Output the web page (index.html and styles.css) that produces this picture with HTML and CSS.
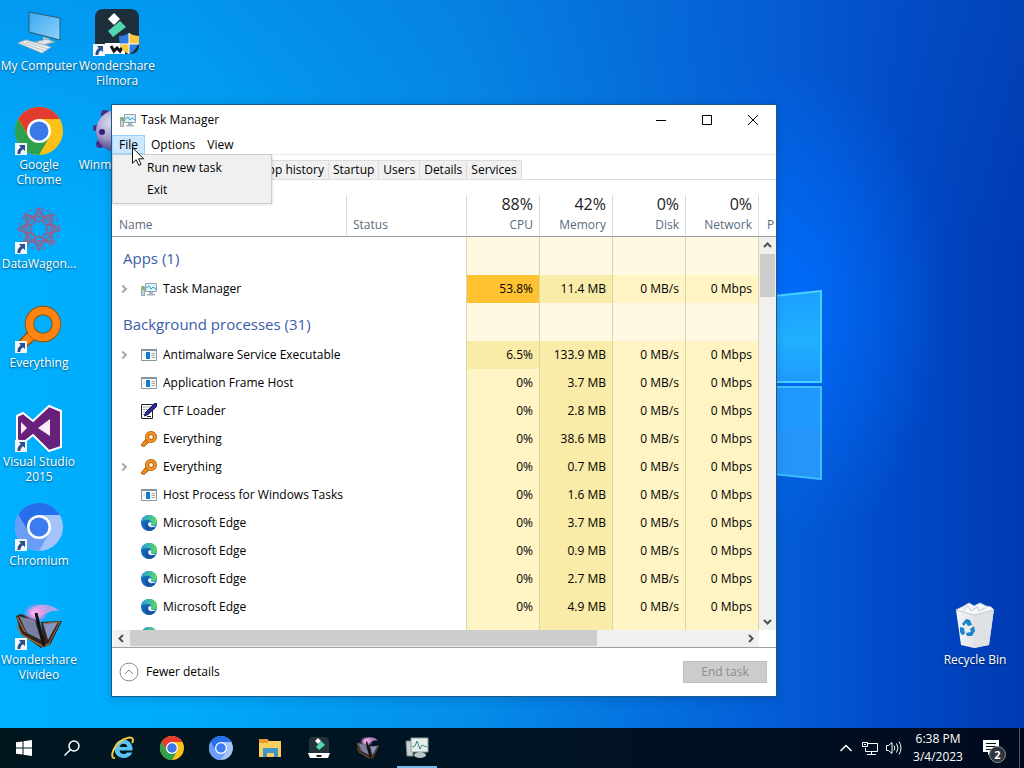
FILE: index.html
```html
<!DOCTYPE html>
<html lang="en">
<head>
    <meta charset="UTF-8">
    <meta name="viewport" content="width=device-width, initial-scale=1.0">
    <title>Task Manager</title>
    <link rel="stylesheet" href="styles.css">
</head>
<body>
    <!-- Shared icons -->
    <svg class="defs" aria-hidden="true">
        <defs>
            <linearGradient id="g-edge" x1="0" y1="0" x2="1" y2="0"><stop offset="0" stop-color="#1b9de2"/><stop offset="1" stop-color="#5fd95f"/></linearGradient>
            <linearGradient id="g-screen" x1="0" y1="0" x2="1" y2="1"><stop offset="0" stop-color="#3aa8ee"/><stop offset="1" stop-color="#8fd4fb"/></linearGradient>
            <linearGradient id="g-bin" x1="0" y1="0" x2="1" y2="0"><stop offset="0" stop-color="#f4f5f7"/><stop offset="1" stop-color="#cfd3d8"/></linearGradient>
            <linearGradient id="g-pane" x1="0" y1="0" x2="0" y2="1"><stop offset="0" stop-color="#1ca0ff"/><stop offset=".55" stop-color="#20b0ff"/><stop offset="1" stop-color="#1f9aff"/></linearGradient>
            <radialGradient id="g-ball" cx=".4" cy=".3" r=".8"><stop offset="0" stop-color="#f2effa"/><stop offset=".5" stop-color="#a7a0d0"/><stop offset="1" stop-color="#2b1f70"/></radialGradient>
            <radialGradient id="g-glow"><stop offset="0" stop-color="#ffe4ff"/><stop offset=".4" stop-color="#ee9aec"/><stop offset="1" stop-color="#c58cf0" stop-opacity="0"/></radialGradient>
        </defs>
        <symbol id="i-shortcut" viewBox="0 0 12 12">
            <path d="M0 0h12v12H0z" fill="#f4f6f8"/>
            <path d="M4 2h6v6L8 6.300C6.500 7.300 5.500 8.500 5.300 11H2.500C2.200 8 3.500 5.800 5.800 4.200z" fill="#2b4f8e"/>
        </symbol>
        <symbol id="i-taskmgr" viewBox="0 0 16 16">
            <path d="M.500 5.500h3v9h-3z" fill="#c9d2d6" stroke="#9aa6ab"/>
            <path d="M1 5h2v4H1z" fill="#7cc063"/>
            <path d="M4.500 2.500h11v8h-11z" fill="#dff3fa" stroke="#95a3aa"/>
            <path d="M5 7l3-2 2 3 2-2 3 2" fill="none" stroke="#3b9fb8"/>
            <path d="M8 11h4v2h2v1.500H6V13h2z" fill="#a9b3b8"/>
        </symbol>
        <symbol id="i-exe" viewBox="0 0 16 16">
            <path d="M.500 2.500h15v11H.500z" fill="#f8fafb" stroke="#8597a2"/>
            <path d="M0 2h16v2H0z" fill="#8597a2"/>
            <path d="M5 5h4v7H5z" fill="#1278d0"/>
            <path d="M10.500 6.500H14M10.500 8.500H14M10.500 10.500H14" stroke="#98a8b1"/>
            <path d="M2 6.500h2M2 8.500h2" stroke="#d5dde2"/>
        </symbol>
        <symbol id="i-ctf" viewBox="0 0 16 16">
            <path d="M.500 1.500h11v14H.500z" fill="#fff" stroke="#222"/>
            <path d="M2.500 4h7M2.500 6.500h6M2.500 9h4M2.500 11.500h2" stroke="#555" stroke-dasharray="1 1"/>
            <path d="M13.500.500h2v3L7 11.500l-3.500 1.500 1-3.500z" fill="#2a2a9a" stroke="#101050"/>
            <path d="M6 13.500h4" stroke="#222"/>
        </symbol>
        <symbol id="i-search" viewBox="0 0 48 48">
            <path d="M14 26l7 7-5 5-2 1-7 7-6-6 8-9z" fill="#ff8412" stroke="#8a5412" stroke-width="1.500"/>
            <circle cx="28" cy="19" r="13.500" fill="none" stroke="#8a5412" stroke-width="9.500"/>
            <circle cx="28" cy="19" r="13.500" fill="none" stroke="#ff8412" stroke-width="7.500"/>
            <path d="M14.500 27.500l6 6" stroke="#ff8412" stroke-width="4"/>
        </symbol>
        <symbol id="i-search-small" viewBox="0 0 16 16">
            <path d="M5 8l3 3-5.500 5L0 14z" fill="#f08a1c" stroke="#a35a0c"/>
            <circle cx="10" cy="6" r="4" fill="#fff0dc" stroke="#a35a0c" stroke-width="4"/>
            <circle cx="10" cy="6" r="4" fill="none" stroke="#f59324" stroke-width="2.500"/>
        </symbol>
        <symbol id="i-edge" viewBox="0 0 16 16">
            <circle cx="8" cy="8" r="8" fill="#1467b8"/>
            <path d="M.200 7C.800 3 4 0 8 0c4.500 0 8 3 8 6.500 0 3-2.500 4.200-4.500 4.200-1.500 0-2.500-.700-1.500-1.700C11 7 9.500 5 6.500 5 3 5 1 6 .200 7z" fill="url(#g-edge)"/>
            <path d="M7 8c-.500 3.500 2 5.500 7.500 4.600A8 8 0 0 1 8 16C5 15 3.500 12.500 4 10.200 4.300 8.800 5.500 7.800 7 8z" fill="#1a4fa0"/>
            <path d="M7.200 8.500C6.500 11 9 12.700 12 12c1.500-.300 2.700-.900 3.300-1.600-2 .8-4.800.6-5.300-.4-.3-.6.600-1 .300-2.200C9.500 7 7.600 7.200 7.200 8.500z" fill="#eafaff"/>
        </symbol>
        <symbol id="i-chrome" viewBox="0 0 48 48">
            <circle cx="24" cy="24" r="24" fill="#fbc116"/>
            <path d="M3.200 12A24 24 0 0 1 44.800 12H24L14 30z" fill="#e33b2e"/>
            <path d="M3.200 12A24 24 0 0 0 24 48L34.400 30 24 34 13.600 30z" fill="#2da04d"/>
            <circle cx="24" cy="24" r="12" fill="#fff"/>
            <circle cx="24" cy="24" r="9.500" fill="#3b78e7"/>
        </symbol>
        <symbol id="i-chromium" viewBox="0 0 48 48">
            <circle cx="24" cy="24" r="24" fill="#a3c3fa"/>
            <path d="M3.200 12A24 24 0 0 1 44.800 12H24L14 30z" fill="#2570ea"/>
            <path d="M3.200 12A24 24 0 0 0 24 48L34.400 30 24 34 13.600 30z" fill="#6a9df5"/>
            <circle cx="24" cy="24" r="12" fill="#fff"/>
            <circle cx="24" cy="24" r="9.500" fill="#3b7df0"/>
        </symbol>
        <symbol id="i-vivideo" viewBox="0 0 48 48">
            <path d="M1 14l5-2 16 6 9 25-5 3L6 32z" fill="#33241f"/>
            <path d="M4 14l16 5 6 19-14-7z" fill="#77809f"/>
            <path d="M26 20l21-1-12 24-6 2z" fill="#33241f"/>
            <path d="M28 21l15-1-10 18z" fill="#8795c4"/>
            <path d="M2 24l5 9 20 11 8-2M2 15l8 15" fill="none" stroke="#9a6c3c" stroke-width="1.500"/>
            <path d="M28 22l17-2-11 21" fill="none" stroke="#9a6c3c"/>
            <ellipse cx="21" cy="11" rx="13" ry="10" fill="url(#g-glow)"/>
            <path d="M18 6c8-6 18-4 27 3-7-1-11 1-17 4-5 2-10-2-10-7z" fill="#e7a0e6" opacity=".75"/>
            <path d="M21 11l8 33" stroke="#151010" stroke-width="3"/>
        </symbol>
    </svg>

    <main class="desktop">
        <svg class="wallpaper-logo" viewBox="0 0 200 190" aria-hidden="true">
            <path d="M0 22L198 1v91H0z" fill="url(#g-pane)" stroke="#46d2ff" stroke-width="2"/>
            <path d="M0 97h198v92L0 168z" fill="#2099ff" stroke="#40c0ff" stroke-width="2"/>
            <path d="M0 168V150l197-12v50z" fill="#2a92f5" opacity=".6"/>
        </svg>

        <!-- Desktop icons -->
        <a class="shortcut" href="#">
            <svg class="icon" viewBox="0 0 48 48">
                <path d="M14 4l31 6v22L14 24z" fill="url(#g-screen)" stroke="#2f5874"/>
                <path d="M28 29l6 1.500v4l-6-1z" fill="#c4ced4"/>
                <path d="M20 34l12-3 8 3-12 3z" fill="#dde5ea" stroke="#90a2ad"/>
                <path d="M3 35l8-3 25 7-9 6z" fill="#eef1f3" stroke="#b0b8bd"/>
                <path d="M7 35l23 8M11 34l22 7" stroke="#b7bfc4"/>
            </svg>
            <span>My Computer</span>
        </a>
        <a class="shortcut" href="#">
            <svg class="icon" viewBox="0 0 48 48"><use href="#i-chrome"/><use href="#i-shortcut" x="0" y="36" width="12" height="12"/></svg>
            <span>Google Chrome</span>
        </a>
        <a class="shortcut" href="#">
            <svg class="icon" viewBox="0 0 48 48">
                <g fill="none" stroke="#8b6594" stroke-width="1.500">
                    <g id="wheel"><path id="petal" d="M24 16l-6-4 6-10 6 10z"/><use href="#petal" transform="rotate(45 24 23)"/><use href="#petal" transform="rotate(90 24 23)"/><use href="#petal" transform="rotate(135 24 23)"/></g>
                    <use href="#wheel" transform="rotate(180 24 23)"/>
                    <path d="M12 11h24v24H12zM24 6l17 17-17 17L7 23z"/>
                    <circle cx="24" cy="23" r="9" stroke-dasharray="2 2"/>
                    <circle cx="24" cy="23" r="14" stroke-dasharray="2 2"/>
                    <circle cx="24" cy="23" r="20" stroke-dasharray="3 3"/>
                </g>
                <use href="#i-shortcut" x="0" y="36" width="12" height="12"/>
            </svg>
            <span>DataWagon...</span>
        </a>
        <a class="shortcut" href="#">
            <svg class="icon" viewBox="0 0 48 48"><use href="#i-search"/><use href="#i-shortcut" x="0" y="36" width="12" height="12"/></svg>
            <span>Everything</span>
        </a>
        <a class="shortcut" href="#">
            <svg class="icon" viewBox="0 0 48 48">
                <path d="M2 12l6-3 10 8L34 2l12 5v36l-12 4-16-16-10 8-6-3z" fill="#68217a" stroke="#fff" stroke-width="2"/>
                <path d="M35 15v17L23 24zM6 18l6 6-6 6z" fill="#fbeafa"/>
                <use href="#i-shortcut" x="0" y="36" width="12" height="12"/>
            </svg>
            <span>Visual Studio 2015</span>
        </a>
        <a class="shortcut" href="#">
            <svg class="icon" viewBox="0 0 48 48"><use href="#i-chromium"/><use href="#i-shortcut" x="0" y="36" width="12" height="12"/></svg>
            <span>Chromium</span>
        </a>
        <a class="shortcut" href="#">
            <svg class="icon" viewBox="0 0 48 48"><use href="#i-vivideo"/><use href="#i-shortcut" x="0" y="36" width="12" height="12"/></svg>
            <span>Wondershare Vivideo</span>
        </a>
        <a class="shortcut" href="#">
            <svg class="icon" viewBox="0 0 48 48">
                <rect x="2" y="1" width="44" height="45" rx="8" fill="#1e2f3c"/>
                <path d="M21 5l6 6-6 6-6-6z" fill="#fff"/>
                <path d="M27 13l6 6-13 10-5-6z" fill="#4fd9ac"/>
                <path d="M12 35h20v11H12z" fill="#fff"/>
                <path d="M18 38l3 5 3-3 3 3 3-5" fill="none" stroke="#111" stroke-width="3"/>
                <path d="M36 25c3 2 6 3 10 3 0 9-3 15-10 18-7-3-10-9-10-18 4 0 7-1 10-3z" fill="#2f7de0"/>
                <path d="M36 25c3 2 6 3 10 3v8H36zM36 36v10c-5-2-8-6-9-10z" fill="#fcc738"/>
                <path d="M36 25v21M26 36h20" stroke="#fff"/>
                <use href="#i-shortcut" x="0" y="36" width="12" height="12"/>
            </svg>
            <span>Wondershare Filmora</span>
        </a>
        <a class="shortcut" href="#">
            <svg class="icon" viewBox="0 0 48 48">
                <g fill="#4a2b86"><circle cx="12" cy="7" r="4"/><circle cx="3" cy="21" r="3"/><circle cx="7" cy="37" r="4"/></g>
                <circle cx="24" cy="24" r="21" fill="url(#g-ball)"/>
                <circle cx="9" cy="25" r="3" fill="#38217a"/>
            </svg>
            <span>Winmpg Vid...</span>
        </a>
        <a class="shortcut recycle-bin" href="#">
            <svg class="icon" viewBox="0 0 48 48">
                <path d="M5 8l38-1-5 36-15 3-13-3z" fill="url(#g-bin)"/>
                <path d="M23 11l20-4-5 36-15 3z" fill="#dfe2e5"/>
                <path d="M5 8l8-4 5-3 5 3 6-3 6 3 5 1 3 3-20 5z" fill="#f5f8fa" stroke="#c1ccd4"/>
                <path d="M12 8l5-4 3 5 6-4 2 4 6-3" fill="none" stroke="#b9c7d0"/>
                <g fill="#1b82cd"><path d="M11 22l4-5 4 1 2 5-4 1-2-3-2 3z"/><path d="M9 25l4 1 1 6-3 1-2-3z"/><path d="M23 24l1 5-3 5-5 0-1-3 5-1-1-3z"/></g>
            </svg>
            <span>Recycle Bin</span>
        </a>

        <!-- Task Manager window -->
        <section class="window">
            <header class="title-bar">
                <svg class="small-icon"><use href="#i-taskmgr"/></svg>
                <h1>Task Manager</h1>
                <button class="window-button" aria-label="Minimize"><svg viewBox="0 0 12 12"><path d="M1 6.500h10"/></svg></button>
                <button class="window-button" aria-label="Maximize"><svg viewBox="0 0 12 12"><path d="M1.500 1.500h9v9h-9z"/></svg></button>
                <button class="window-button" aria-label="Close"><svg viewBox="0 0 12 12"><path d="M1 1l10 10M11 1L1 11"/></svg></button>
            </header>
            <nav class="menu-bar">
                <div class="menu">
                    <button class="menu-button open">File</button>
                    <div class="menu-list">
                        <button>Run new task</button>
                        <button>Exit</button>
                    </div>
                    <svg class="cursor" viewBox="0 0 12 19"><path d="M.500.700v15.500l3.700-3.500 2.500 5.600 2.300-1-2.400-5.500h5z" fill="#fff" stroke="#111"/></svg>
                </div>
                <button class="menu-button">Options</button>
                <button class="menu-button">View</button>
            </nav>
            <div class="tabs">
                <button>App history</button>
                <button>Startup</button>
                <button>Users</button>
                <button>Details</button>
                <button>Services</button>
            </div>

            <div class="process-list">
                <table>
                    <colgroup><col><col class="col-status"><col class="col-usage"><col class="col-usage"><col class="col-usage"><col class="col-usage"><col class="col-last"></colgroup>
                    <thead>
                        <tr>
                            <th>Name</th>
                            <th>Status</th>
                            <th><b>88%</b>CPU</th>
                            <th><b>42%</b>Memory</th>
                            <th><b>0%</b>Disk</th>
                            <th><b>0%</b>Network</th>
                            <th>P</th>
                        </tr>
                    </thead>
                    <tbody>
                        <tr class="group"><th colspan="2">Apps (1)</th><td></td><td></td><td></td><td></td></tr>
                        <tr><th colspan="2"><div class="process expandable"><svg class="small-icon"><use href="#i-taskmgr"/></svg>Task Manager</div></th><td class="heat-high">53.8%</td><td class="heat-low">11.4 MB</td><td>0 MB/s</td><td>0 Mbps</td></tr>
                        <tr class="group"><th colspan="2">Background processes (31)</th><td></td><td></td><td></td><td></td></tr>
                        <tr><th colspan="2"><div class="process expandable"><svg class="small-icon"><use href="#i-exe"/></svg>Antimalware Service Executable</div></th><td class="heat-low">6.5%</td><td class="heat-low">133.9 MB</td><td>0 MB/s</td><td>0 Mbps</td></tr>
                        <tr><th colspan="2"><div class="process"><svg class="small-icon"><use href="#i-exe"/></svg>Application Frame Host</div></th><td>0%</td><td class="heat-low">3.7 MB</td><td>0 MB/s</td><td>0 Mbps</td></tr>
                        <tr><th colspan="2"><div class="process"><svg class="small-icon"><use href="#i-ctf"/></svg>CTF Loader</div></th><td>0%</td><td class="heat-low">2.8 MB</td><td>0 MB/s</td><td>0 Mbps</td></tr>
                        <tr><th colspan="2"><div class="process"><svg class="small-icon"><use href="#i-search-small"/></svg>Everything</div></th><td>0%</td><td class="heat-low">38.6 MB</td><td>0 MB/s</td><td>0 Mbps</td></tr>
                        <tr><th colspan="2"><div class="process expandable"><svg class="small-icon"><use href="#i-search-small"/></svg>Everything</div></th><td>0%</td><td class="heat-low">0.7 MB</td><td>0 MB/s</td><td>0 Mbps</td></tr>
                        <tr><th colspan="2"><div class="process"><svg class="small-icon"><use href="#i-exe"/></svg>Host Process for Windows Tasks</div></th><td>0%</td><td class="heat-low">1.6 MB</td><td>0 MB/s</td><td>0 Mbps</td></tr>
                        <tr><th colspan="2"><div class="process"><svg class="small-icon"><use href="#i-edge"/></svg>Microsoft Edge</div></th><td>0%</td><td class="heat-low">3.7 MB</td><td>0 MB/s</td><td>0 Mbps</td></tr>
                        <tr><th colspan="2"><div class="process"><svg class="small-icon"><use href="#i-edge"/></svg>Microsoft Edge</div></th><td>0%</td><td class="heat-low">0.9 MB</td><td>0 MB/s</td><td>0 Mbps</td></tr>
                        <tr><th colspan="2"><div class="process"><svg class="small-icon"><use href="#i-edge"/></svg>Microsoft Edge</div></th><td>0%</td><td class="heat-low">2.7 MB</td><td>0 MB/s</td><td>0 Mbps</td></tr>
                        <tr><th colspan="2"><div class="process"><svg class="small-icon"><use href="#i-edge"/></svg>Microsoft Edge</div></th><td>0%</td><td class="heat-low">4.9 MB</td><td>0 MB/s</td><td>0 Mbps</td></tr>
                        <tr><th colspan="2"><div class="process"><svg class="small-icon"><use href="#i-edge"/></svg></div></th><td></td><td class="heat-low"></td><td></td><td></td></tr>
                    </tbody>
                </table>
                <div class="scrollbar vertical">
                    <svg viewBox="0 0 17 17"><path d="M5 10l3.500-3.500L12 10"/></svg>
                    <span class="thumb"></span>
                    <svg viewBox="0 0 17 17"><path d="M5 7l3.500 3.500L12 7"/></svg>
                </div>
            </div>
            <div class="scrollbar-row">
                <div class="scrollbar horizontal">
                    <svg viewBox="0 0 17 17"><path d="M10 5L6.500 8.500 10 12"/></svg>
                    <span class="thumb"></span>
                    <svg viewBox="0 0 17 17"><path d="M7 5l3.500 3.500L7 12"/></svg>
                </div>
            </div>

            <footer class="window-footer">
                <button class="fewer"><svg viewBox="0 0 20 20"><circle cx="10" cy="10" r="9"/><path d="M6 12l4-4 4 4"/></svg>Fewer details</button>
                <button class="end-task" disabled>End task</button>
            </footer>
        </section>
    </main>

    <!-- Taskbar -->
    <footer class="taskbar">
        <button class="task" aria-label="Start"><svg class="small-icon" viewBox="0 0 16 16"><path d="M0 2.300l6.500-.900v6.100H0zM7.500 1.200L16 0v7.500H7.500zM0 8.500h6.500v6.100L0 13.700zM7.500 8.500H16V16l-8.500-1.200z" fill="#fff"/></svg></button>
        <button class="task" aria-label="Search"><svg class="small-icon" viewBox="0 0 16 16"><circle cx="10" cy="6" r="5" fill="none" stroke="#fff" stroke-width="1.500"/><path d="M6.500 9.500L.500 15.500" stroke="#fff" stroke-width="1.500"/></svg></button>
        <div class="task-list">
            <button class="task" aria-label="Internet Explorer"><svg viewBox="0 0 24 24">
                <path d="M12.500 3.500A9 9 0 0 0 3.500 13c0 5 4 9 9.200 9 4 0 7.200-2 8.600-5.500h-5.500c-.8 1-1.800 1.500-3.200 1.500-2.200 0-3.800-1.300-4-3.500h13c.4-6-3.400-11-9.100-11zM8.700 11c.4-2 1.900-3.200 3.900-3.200s3.400 1.200 3.700 3.200z" fill="#5cc4f2"/>
                <path d="M4 22C-1 23 1 13 8 6.500 14 1 22 0 22 4c0 1-.3 2-1 3" fill="none" stroke="#f2cb3a" stroke-width="2"/>
            </svg></button>
            <button class="task" aria-label="Google Chrome"><svg><use href="#i-chrome"/></svg></button>
            <button class="task" aria-label="Chromium"><svg><use href="#i-chromium"/></svg></button>
            <button class="task" aria-label="File Explorer"><svg viewBox="0 0 24 24">
                <path d="M1 3h8l2 2h12v16H1z" fill="#f7cf5c"/>
                <path d="M1 3h8l2 2-2 2H1z" fill="#e79b2c"/>
                <path d="M5 12h15v9h-4v-4H9v4H5z" fill="#3f94c8"/>
            </svg></button>
            <button class="task" aria-label="Wondershare Filmora"><svg viewBox="0 0 24 24">
                <rect x="2" y="1" width="20" height="19" rx="4" fill="#22333e"/>
                <path d="M11 2l3 3-3 3-3-3z" fill="#fff"/>
                <path d="M14 5l4 4-6 5-3-3z" fill="#4fd9ac"/>
                <path d="M1 17h22l-2 5H3z" fill="#fff"/><path d="M9 19h6l-1 2h-4z" fill="#222"/>
            </svg></button>
            <button class="task" aria-label="Wondershare Vivideo"><svg><use href="#i-vivideo"/></svg></button>
            <button class="task active" aria-label="Task Manager"><svg viewBox="0 0 24 24">
                <path d="M1 5h7v15H2z" fill="#c9d2d2" stroke="#7d8a8a"/>
                <path d="M6 2h17v14H6z" fill="#e6eeec" stroke="#8c9999"/>
                <path d="M7 11l3-1 2-5 3 8 2-4 5 2" fill="none" stroke="#3d8a84"/>
                <ellipse cx="15" cy="19" rx="6" ry="3" fill="#bcc5c5"/>
            </svg></button>
        </div>
        <div class="tray">
            <svg viewBox="0 0 16 16"><path d="M2.500 11L8 5.500l5.500 5.500" stroke-width="1.500"/></svg>
            <svg viewBox="0 0 16 16"><path d="M5 3.500h10.500v8H3.500V8M9.500 12v2.500M5 14.500h9M.500 2.500h5v4h-5zM2 4.500h2"/></svg>
            <svg viewBox="0 0 16 16"><path d="M.500 5.500h2l3.500-3v11l-3.500-3h-2zM8 5.500q1.500 2.500 0 5M10.500 3.500q3 4.500 0 9M13 1.500q4 6.500 0 13"/></svg>
            <time class="clock">6:38 PM<br>3/4/2023</time>
            <button class="notifications" aria-label="Notifications"><svg viewBox="0 0 16 16"><path d="M0 0h16v12H8l-3 3v-3H0z" fill="#fff" stroke="none"/><path d="M3 3.500h10M3 6.500h10M3 9.500h6" stroke="#00101c"/></svg><span class="badge">2</span></button>
        </div>
    </footer>
</body>
</html>
```
FILE: styles.css
```css
* {
    box-sizing: border-box;
}
body {
    margin: 0;
    height: 100vh;
    display: flex;
    flex-direction: column;
    overflow: hidden;
    font-family: "Open Sans", "Noto Sans", sans-serif;
    font-size: 12px;
    line-height: 16px;
    color: #000;
}
button {
    font: inherit;
    color: inherit;
    border: 0;
    padding: 0;
    background: none;
}
.defs {
    position: absolute;
    width: 0;
    height: 0;
}
.small-icon {
    width: 16px;
    height: 16px;
    flex: none;
}

/* Desktop */
.desktop {
    position: relative;
    flex: 1;
    display: grid;
    grid-template-columns: 78px 78px 1fr 78px;
    grid-template-rows: repeat(7, 99px);
    grid-auto-flow: column;
    padding-right: 10px;
    background:
        radial-gradient(ellipse 160px 240px at 77% 42%, rgba(0, 110, 255, 0.9), rgba(0, 100, 255, 0)),
        linear-gradient(180deg, rgba(10, 90, 200, 0.25) 0%, rgba(0, 90, 200, 0) 35%),
        linear-gradient(90deg, #00b0ff 0%, #00aafa 18%, #058eea 45%, #045cd6 76%, #0049c6 88%, #003ab2 100%);
}
.wallpaper-logo {
    position: absolute;
    left: 623px;
    top: 290px;
    width: 200px;
    height: 190px;
}
.shortcut {
    position: relative;
    display: flex;
    flex-direction: column;
    align-items: center;
    padding-top: 8px;
    color: #fff;
    text-align: center;
    text-decoration: none;
    line-height: 15px;
    text-shadow: 0 1px 2px rgba(0, 0, 0, 0.6);
}
.shortcut .icon {
    width: 48px;
    height: 48px;
    margin-bottom: 2px;
}
.recycle-bin {
    grid-column: 4;
    grid-row: 7;
}

/* Window */
.window {
    position: absolute;
    left: 111px;
    top: 104px;
    width: 666px;
    height: 593px;
    display: flex;
    flex-direction: column;
    background: #fff;
    border: 1px solid #1b5a8c;
    box-shadow: 0 2px 10px rgba(0, 0, 0, 0.15);
}
.title-bar {
    display: flex;
    align-items: center;
    height: 30px;
    padding-left: 8px;
}
.title-bar h1 {
    flex: 1;
    margin: 0 0 0 5px;
    font-size: 12px;
    font-weight: normal;
}
.window-button {
    display: flex;
    align-items: center;
    justify-content: center;
    width: 46px;
    height: 30px;
}
.window-button svg {
    width: 12px;
    height: 12px;
    fill: none;
    stroke: #000;
}
.menu-bar {
    display: flex;
    height: 20px;
    border-bottom: 1px solid #ececec;
}
.menu {
    position: relative;
}
.menu-button {
    height: 19px;
    padding: 0 6px;
}
.menu-button.open {
    background: #cce8ff;
    border: 1px solid #99d1ff;
}
.menu-list {
    position: absolute;
    z-index: 1;
    left: 0;
    top: 19px;
    width: 160px;
    padding: 2px;
    background: #f0f0f0;
    border: 1px solid #ccc;
    box-shadow: 1px 1px 2px rgba(0, 0, 0, 0.1);
}
.menu-list button {
    display: block;
    width: 100%;
    height: 22px;
    padding-left: 32px;
    text-align: left;
}
.cursor {
    position: absolute;
    z-index: 2;
    left: 20px;
    top: 12px;
    width: 12px;
    height: 19px;
}
.tabs {
    display: flex;
    margin-top: 5px;
    padding-left: 144px;
    border-bottom: 1px solid #dcdcdc;
}
.tabs button {
    height: 19px;
    padding: 0 4px;
    background: #f0f0f0;
    border: 1px solid #dcdcdc;
    border-width: 1px 1px 0 0;
}

/* Process list */
.process-list {
    position: relative;
    flex: 1;
    min-height: 0;
    margin-top: 15px;
    overflow: hidden;
}
table {
    width: 100%;
    table-layout: fixed;
    border-collapse: separate;
    border-spacing: 0;
}
.col-status {
    width: 120px;
}
.col-usage {
    width: 73px;
}
.col-last {
    width: 17px;
}
th {
    padding: 0;
    font-weight: normal;
    text-align: left;
}
thead th {
    height: 42px;
    padding: 0 6px 3px;
    vertical-align: bottom;
    color: #5b6b7b;
    border-right: 1px solid #dcdcdc;
    border-bottom: 1px solid #999;
}
thead th:nth-child(n+3) {
    text-align: right;
}
thead th:first-child {
    padding-left: 7px;
}
thead th:last-child {
    padding-left: 8px;
    padding-right: 0;
    border-right: 0;
    text-align: left;
}
thead b {
    display: block;
    margin-bottom: 4px;
    font-size: 16px;
    line-height: 18px;
    font-weight: normal;
    color: #222;
}
tbody tr {
    height: 28px;
}
tbody tr.group {
    height: 38px;
}
tbody th {
    border-right: 1px solid #d9d6b0;
}
tbody td {
    padding: 0 6px 0 0;
    text-align: right;
    background: #fff4c4;
    border-right: 1px solid #ddd6a4;
}
.group th {
    padding: 4px 0 0 11px;
    font-size: 15px;
    line-height: 20px;
    color: #3a5da8;
}
.group td {
    background: #fff9e4;
}
.heat-low {
    background: #f9eca8;
}
.heat-high {
    background: #ffc233;
}
.process {
    display: flex;
    align-items: center;
    gap: 6px;
    padding-left: 29px;
}
.expandable {
    padding-left: 8px;
}
.expandable::before {
    content: "";
    width: 4px;
    height: 4px;
    margin-right: 9px;
    border: solid #aaa;
    border-width: 2px 2px 0 0;
    transform: rotate(45deg);
}

/* Scrollbars */
.scrollbar {
    display: flex;
    background: #f0f0f0;
}
.scrollbar svg {
    flex: none;
    width: 17px;
    height: 17px;
    fill: none;
    stroke: #505050;
    stroke-width: 2;
}
.scrollbar svg:last-child {
    margin-top: auto;
    margin-left: auto;
}
.thumb {
    background: #cdcdcd;
}
.vertical {
    position: absolute;
    top: 42px;
    right: 0;
    bottom: 0;
    width: 17px;
    flex-direction: column;
}
.vertical .thumb {
    height: 43px;
    margin: 0 1px;
}
.scrollbar-row {
    padding: 0 17px 0 1px;
    border-bottom: 1px solid #a0a0a0;
}
.horizontal .thumb {
    width: 467px;
    height: 16px;
}

/* Window footer */
.window-footer {
    display: flex;
    align-items: center;
    justify-content: space-between;
    height: 48px;
    padding: 0 9px 0 7px;
}
.fewer {
    display: flex;
    align-items: center;
    gap: 7px;
}
.fewer svg {
    width: 20px;
    height: 20px;
    fill: none;
    stroke: #8a8a8a;
}
.end-task {
    width: 84px;
    height: 22px;
    background: #ccc;
    border: 1px solid #bfbfbf;
    color: #8d8d8d;
}

/* Taskbar */
.taskbar {
    display: flex;
    height: 40px;
    background: linear-gradient(90deg, #00161f, #001424 50%, #000a1e);
    color: #fff;
}
.task {
    display: flex;
    align-items: center;
    justify-content: center;
    width: 48px;
    height: 40px;
}
.task svg:not(.small-icon) {
    width: 24px;
    height: 24px;
}
.task-list {
    display: flex;
    gap: 1px;
    margin-left: 3px;
}
.task-list .active {
    background: linear-gradient(#76b9ed, #76b9ed) bottom / 40px 2px no-repeat;
}
.tray {
    display: flex;
    align-items: center;
    gap: 8px;
    margin-left: auto;
    margin-right: 4px;
    padding-right: 19px;
    border-right: 1px solid #4a5560;
}
.tray svg {
    width: 16px;
    height: 16px;
    fill: none;
    stroke: #fff;
}
.clock {
    width: 56px;
    margin: 0 8px 0 0;
    text-align: center;
    line-height: 18px;
}
.notifications {
    position: relative;
    width: 18px;
    height: 16px;
}
.badge {
    position: absolute;
    left: 7px;
    top: 6px;
    width: 17px;
    height: 17px;
    border: 1px solid #8a8f96;
    border-radius: 50%;
    background: #30343c;
    color: #fff;
    font-size: 11px;
    line-height: 15px;
    font-weight: bold;
}
```
